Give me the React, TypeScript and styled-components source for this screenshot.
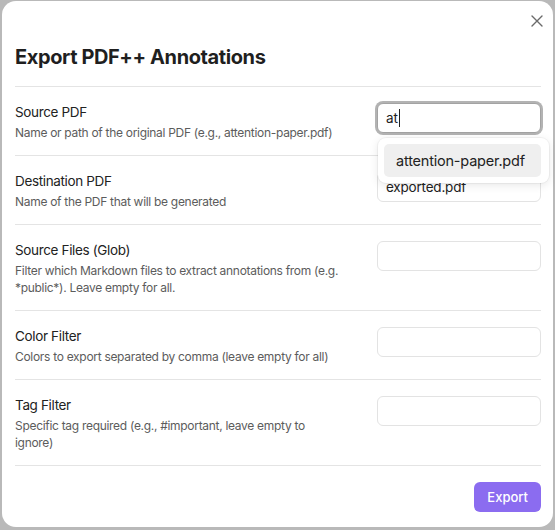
import React from "react";
import styled, { createGlobalStyle } from "styled-components";

const Global = createGlobalStyle`
  html, body { margin: 0; padding: 0; }
  body {
    background: #b9b9b9;
    font-family: Inter, "Noto Sans", "Liberation Sans", sans-serif;
    -webkit-font-smoothing: antialiased;
  }
  * { box-sizing: border-box; }
`;

const Modal = styled.div`
  position: relative;
  width: 551px;
  height: 526px;
  margin: 1px 0 0 2px;
  background: #ffffff;
  border-radius: 14px;
  padding: 44px 12px 0 13px;
  display: flex;
  flex-direction: column;
`;

const CloseButton = styled.button`
  position: absolute;
  top: 13px;
  right: 9px;
  width: 14px;
  height: 14px;
  padding: 0;
  border: none;
  background: transparent;
  display: flex;
  align-items: center;
  justify-content: center;
  color: #6a6a6a;
  cursor: pointer;
`;

const Title = styled.h2`
  margin: 0 0 17px;
  font-size: 20px;
  line-height: 24px;
  font-weight: 700;
  color: #1f1f1f;
  letter-spacing: -0.02em;
`;

const Row = styled.div<{ $last?: boolean }>`
  display: flex;
  align-items: flex-start;
  padding: 15px 0 14px;
  border-top: 1px solid #e4e4e4;
  ${(p) => (p.$last ? "border-bottom: 1px solid #e4e4e4;" : "")}
`;

const Info = styled.div`
  flex: 0 1 327px;
  margin-right: auto;
`;

const Name = styled.div`
  font-size: 13.5px;
  line-height: 20px;
  letter-spacing: -0.35px;
  color: #222222;
`;

const Description = styled.div`
  margin-top: 2px;
  font-size: 12px;
  line-height: 17px;
  letter-spacing: -0.3px;
  color: #5c5c5c;
`;

const Control = styled.div`
  position: relative;
  flex: 0 0 164px;
  padding-top: 1px;
`;

const TextInput = styled.input`
  display: block;
  width: 164px;
  height: 30px;
  padding: 0 8px;
  border: 1px solid #e3e3e3;
  border-radius: 6px;
  background: #ffffff;
  font-family: inherit;
  font-size: 13.5px;
  letter-spacing: -0.2px;
  color: #222222;
  outline: none;
`;

const FocusedInput = styled.div`
  display: flex;
  align-items: center;
  width: 164px;
  height: 30px;
  padding: 0 8px;
  border: 1px solid #a3a3a3;
  box-shadow: 0 0 0 2px #b3b3b3;
  border-radius: 6px;
  background: #ffffff;
  font-size: 13.5px;
  letter-spacing: -0.2px;
  color: #222222;
`;

const Caret = styled.span`
  display: inline-block;
  width: 1px;
  height: 18px;
  margin-left: 1px;
  background: #222222;
`;

const Suggestions = styled.div`
  position: absolute;
  z-index: 5;
  top: 36px;
  left: 1px;
  width: 171px;
  padding: 6px 8px 6px 6px;
  background: #ffffff;
  border-radius: 8px;
  box-shadow: 0 0 0 1px rgba(0, 0, 0, 0.04), 0 2px 10px rgba(0, 0, 0, 0.1);
`;

const SuggestionItem = styled.div<{ $selected?: boolean }>`
  height: 33px;
  display: flex;
  align-items: center;
  padding: 0 12px;
  border-radius: 5px;
  background: ${(p) => (p.$selected ? "#efefef" : "transparent")};
  font-size: 14.5px;
  letter-spacing: -0.2px;
  white-space: nowrap;
  color: #222222;
`;

const Footer = styled.div`
  display: flex;
  justify-content: flex-end;
  padding-top: 16px;
`;

const ExportButton = styled.button`
  height: 30px;
  padding: 0 13px;
  border: none;
  border-radius: 6px;
  background: #8b6cf0;
  color: #ffffff;
  font-family: inherit;
  font-size: 13px;
  font-weight: 500;
  cursor: pointer;
`;

type Setting = {
  name: string;
  desc: string;
  value?: string;
};

const settings: Setting[] = [
  { name: "Destination PDF", desc: "Name of the PDF that will be generated", value: "exported.pdf" },
  {
    name: "Source Files (Glob)",
    desc: "Filter which Markdown files to extract annotations from (e.g. *public*). Leave empty for all.",
  },
  { name: "Color Filter", desc: "Colors to export separated by comma (leave empty for all)" },
  { name: "Tag Filter", desc: "Specific tag required (e.g., #important, leave empty to ignore)" },
];

export default function App() {
  return (
    <>
      <Global />
      <Modal>
        <CloseButton aria-label="Close">
          <svg width="12" height="12" viewBox="0 0 12 12" fill="none">
            <path d="M1 1L11 11M11 1L1 11" stroke="currentColor" strokeWidth="1.4" strokeLinecap="round" />
          </svg>
        </CloseButton>
        <Title>Export PDF++ Annotations</Title>

        <Row>
          <Info>
            <Name>Source PDF</Name>
            <Description>Name or path of the original PDF (e.g., attention-paper.pdf)</Description>
          </Info>
          <Control>
            <FocusedInput>
              at
              <Caret />
            </FocusedInput>
            <Suggestions>
              <SuggestionItem $selected>attention-paper.pdf</SuggestionItem>
            </Suggestions>
          </Control>
        </Row>

        {settings.map((s, i) => (
          <Row key={s.name} $last={i === settings.length - 1}>
            <Info>
              <Name>{s.name}</Name>
              <Description>{s.desc}</Description>
            </Info>
            <Control>
              <TextInput defaultValue={s.value ?? ""} />
            </Control>
          </Row>
        ))}

        <Footer>
          <ExportButton>Export</ExportButton>
        </Footer>
      </Modal>
    </>
  );
}
